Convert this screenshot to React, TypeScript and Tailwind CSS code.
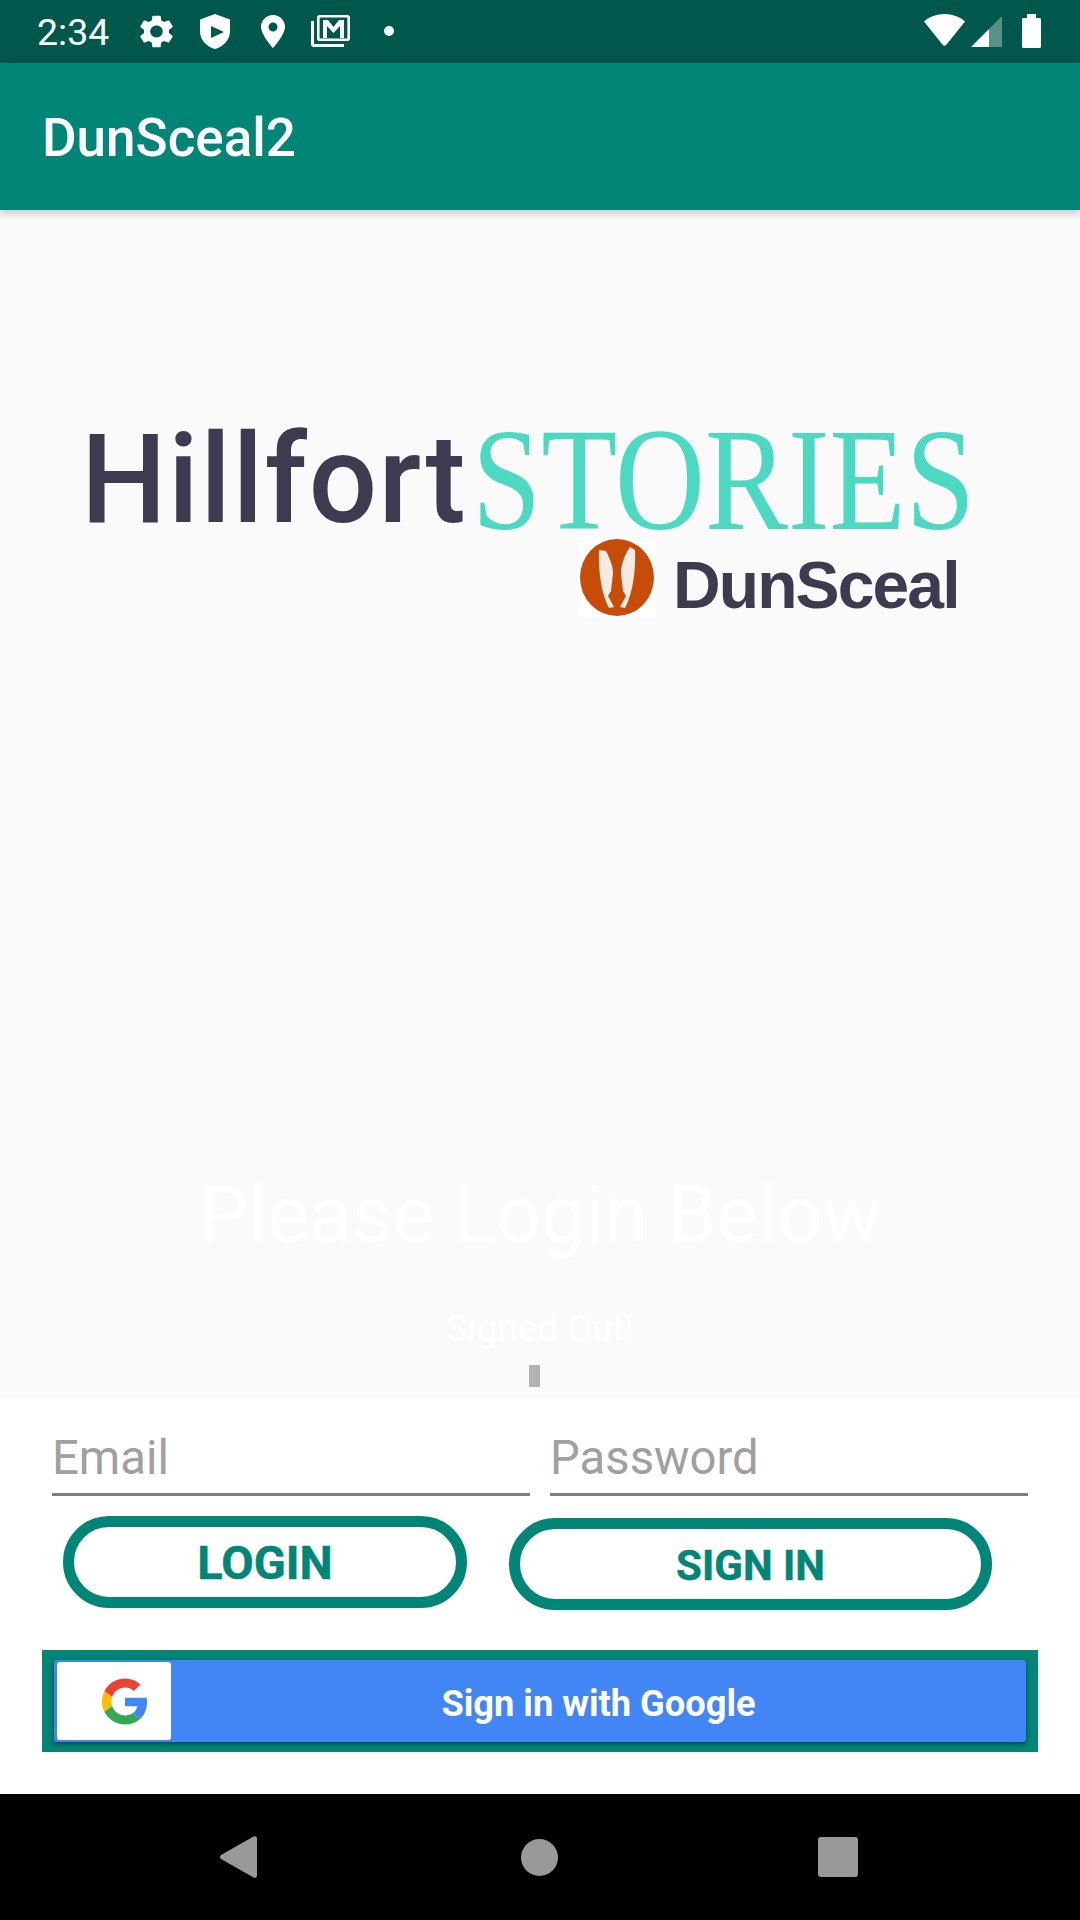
import React from 'react';

const roboto = { fontFamily: 'Roboto, sans-serif' };

const StatusIcons = () => (
  <>
    <svg className="absolute left-[140px] top-[15px] h-[33px] w-[33px]" viewBox="2.5 2 19 20" fill="#fff" preserveAspectRatio="none">
      <path d="M19.14 12.94c.04-.3.06-.61.06-.94 0-.32-.02-.64-.07-.94l2.03-1.58c.18-.14.23-.41.12-.61l-1.92-3.32c-.12-.22-.37-.29-.59-.22l-2.39.96c-.5-.38-1.03-.7-1.62-.94l-.36-2.54c-.04-.24-.24-.41-.48-.41h-3.84c-.24 0-.43.17-.47.41l-.36 2.54c-.59.24-1.13.57-1.62.94l-2.39-.96c-.22-.08-.47 0-.59.22L2.74 8.87c-.12.21-.08.47.12.61l2.03 1.58c-.05.3-.09.63-.09.94s.02.64.07.94l-2.03 1.58c-.18.14-.23.41-.12.61l1.92 3.32c.12.22.37.29.59.22l2.39-.96c.5.38 1.03.7 1.62.94l.36 2.54c.05.24.24.41.48.41h3.84c.24 0 .44-.17.47-.41l.36-2.54c.59-.24 1.13-.56 1.62-.94l2.39.96c.22.08.47 0 .59-.22l1.92-3.32c.12-.22.07-.47-.12-.61l-2.01-1.58zM12 15.6c-1.98 0-3.6-1.62-3.6-3.6s1.62-3.6 3.6-3.6 3.6 1.62 3.6 3.6-1.62 3.6-3.6 3.6z" />
    </svg>
    <svg className="absolute left-[200px] top-[14px] h-[35px] w-[30px]" viewBox="0 0 30 35" fill="#fff">
      <path fillRule="evenodd" d="M15 0L30 5.5V17C30 26 23.5 32.5 15 35C6.5 32.5 0 26 0 17V5.5ZM11 12V24L24 18Z" />
    </svg>
    <svg className="absolute left-[261px] top-[15px] h-[33px] w-[24px]" viewBox="0 0 24 33" fill="#fff">
      <path fillRule="evenodd" d="M12 0C5.4 0 0 5.2 0 11.7C0 20 12 33 12 33S24 20 24 11.7C24 5.2 18.6 0 12 0ZM12 7.5a4.5 4.5 0 1 1 0 9a4.5 4.5 0 1 1 0-9Z" />
    </svg>
    <svg className="absolute left-[311px] top-[15px] h-[33px] w-[39px]" viewBox="0 0 39 33" fill="none">
      <path d="M1.5 6V29C1.5 30 2 30.5 3 30.5H33" stroke="#fff" strokeWidth="3" />
      <rect x="7.3" y="1.3" width="30.4" height="23.4" rx="1.5" stroke="#fff" strokeWidth="2.6" />
      <path d="M12 5H17L22.5 12L28 5H33V23H29V11L22.5 18L16 11V23H12Z" fill="#fff" />
    </svg>
    <div className="absolute left-[384px] top-[26px] h-[10px] w-[10px] rounded-full bg-white" />
    <svg className="absolute left-[924px] top-[14px] h-[32px] w-[41px]" viewBox="0 0 41 32" fill="#fff">
      <path d="M20.5 0C12.5 0 5.5 2.8 0 7.5L18.8 31C19.7 32.1 21.3 32.1 22.2 31L41 7.5C35.5 2.8 28.5 0 20.5 0Z" />
    </svg>
    <svg className="absolute left-[971px] top-[16px] h-[31px] w-[31px]" viewBox="0 0 31 31" fill="#fff">
      <path d="M18 13L0 31H18Z" />
      <path d="M18 13L30 1C30.5 .5 31 .8 31 1.5V31H18Z" opacity="0.35" />
    </svg>
    <svg className="absolute left-[1022px] top-[14px] h-[34px] w-[19px]" viewBox="0 0 19 34" fill="#fff">
      <path d="M5 0H14V4H17.5C18.4 4 19 4.6 19 5.5V32.5C19 33.4 18.4 34 17.5 34H1.5C.6 34 0 33.4 0 32.5V5.5C0 4.6 .6 4 1.5 4H5Z" />
    </svg>
  </>
);

const GoogleG = () => (
  <svg className="h-[47px] w-[46px]" viewBox="0 0 48 48">
    <path fill="#EA4335" d="M24 9.5c3.54 0 6.71 1.22 9.21 3.6l6.85-6.85C35.9 2.38 30.47 0 24 0 14.62 0 6.51 5.38 2.56 13.22l7.98 6.19C12.43 13.72 17.74 9.5 24 9.5z" />
    <path fill="#4285F4" d="M46.98 24.55c0-1.57-.15-3.09-.38-4.55H24v9.02h12.94c-.58 2.96-2.26 5.48-4.78 7.18l7.73 6c4.51-4.18 7.09-10.36 7.09-17.65z" />
    <path fill="#FBBC05" d="M10.53 28.59c-.48-1.45-.76-2.99-.76-4.59s.27-3.14.76-4.59l-7.98-6.19C.92 16.46 0 20.12 0 24c0 3.88.92 7.54 2.56 10.78l7.97-6.19z" />
    <path fill="#34A853" d="M24 48c6.48 0 11.93-2.13 15.89-5.81l-7.73-6c-2.15 1.45-4.92 2.3-8.16 2.3-6.26 0-11.57-4.22-13.47-9.91l-7.98 6.19C6.51 42.62 14.62 48 24 48z" />
  </svg>
);

// the logo in the reference is an upscaled bitmap, hence the slight blur
const Logo = () => (
  <div className="ml-[81px] mt-[216px] h-[191px] w-[889px] blur-[0.6px]">
    <div className="flex h-[112px] items-start">
      <span className="w-[391px] shrink-0 origin-left scale-x-[0.965] text-[125px] leading-[108px] font-medium tracking-[1.5px] text-[#3f3a4f]">
        Hillfort
      </span>
      <span className="origin-left scale-x-[0.853] text-[146px] leading-[108px] text-[#4dd8c2]" style={{ fontFamily: '"Liberation Serif", serif' }}>
        STORIES
      </span>
    </div>
    <div className="ml-[497px] flex items-start gap-[17px]">
      <div className="flex h-[79px] w-[78px] shrink-0 items-center justify-center bg-white">
        <svg className="h-[77px] w-[74px]" viewBox="0 0 74 77">
          <ellipse cx="37" cy="38.5" rx="37" ry="38.5" fill="#c84c09" />
          <path d="M19 11L26 12C30 20 33 27 33 34L31 52L28 57L34 68L29 69C22 56 18 34 19 11Z" fill="#f4ebe4" />
          <path d="M50 8L55 11C56 34 52 56 45 69L40 68L46 57L43 52L41 34C41 27 44 16 50 8Z" fill="#f4ebe4" />
        </svg>
      </div>
      <span className="mt-[8px] text-[66px] leading-[79px] font-bold tracking-[-1.9px] text-[#3f3a4f]" style={{ fontFamily: '"Liberation Sans", sans-serif' }}>
        DunSceal
      </span>
    </div>
  </div>
);

export default function App() {
  return (
    <div className="relative flex h-[1920px] w-[1080px] flex-col overflow-hidden bg-white" style={roboto}>
      <div className="relative h-[63px] shrink-0 bg-[#00574b]">
        <span className="absolute left-[37px] top-[11px] text-[37.5px] leading-[43px] text-white">2:34</span>
        <StatusIcons />
      </div>

      <div className="relative z-10 flex h-[147px] shrink-0 items-center bg-[#008577] pl-[42px] pt-[2px] shadow-[0_3px_8px_rgba(0,0,0,0.22)]">
        <span className="text-[53px] leading-[62px] font-medium text-white">DunSceal2</span>
      </div>

      <div className="flex h-[1189px] shrink-0 flex-col bg-[#fafafa]">
        <Logo />
        <h1 className="mt-[552px] text-center text-[78.75px] leading-[92px] font-normal text-white">Please Login Below</h1>
        <p className="mt-[46px] text-center text-[36.75px] leading-[43px] text-white">Signed Out!</p>
        <div className="ml-[529px] mt-[15px] h-[22px] w-[11px] bg-[#b3b3b3]" />
      </div>

      <div className="h-[395px] shrink-0 bg-white">
        <div className="ml-[52px] mt-[30px] flex gap-[20px]">
          <div className="h-[67px] w-[478px] border-b-[3px] border-[#7d7d7d] text-[47.25px] leading-[59px] text-[#a0a0a0]">Email</div>
          <div className="h-[67px] w-[478px] border-b-[3px] border-[#7d7d7d] text-[47.25px] leading-[59px] text-[#a0a0a0]">Password</div>
        </div>
        <div className="ml-[63px] mt-[20px] flex items-start gap-[42px]">
          <button className="flex h-[92px] w-[404px] items-center justify-center rounded-full border-[11px] border-[#008577] pt-[2px] text-[47px] font-bold text-[#008577] [-webkit-text-stroke:0.5px_#008577]">LOGIN</button>
          <button className="mt-[2px] flex h-[92px] w-[483px] items-center justify-center rounded-full border-[11px] border-[#008577] pt-[2px] text-[42px] font-bold text-[#008577] [-webkit-text-stroke:0.5px_#008577]">SIGN IN</button>
        </div>
        <div className="ml-[42px] mt-[40px] h-[102px] w-[996px] bg-[#008577] px-[12px] py-[10px]">
          <div className="flex h-[82px] items-center rounded-[3px] bg-[#4285f4] pl-[3px] shadow-[0_2px_5px_rgba(0,0,0,0.45)]">
            <div className="flex h-[78px] w-[114px] shrink-0 items-center justify-center rounded-[3px] bg-white pl-[22px]">
              <GoogleG />
            </div>
            <span className="flex-1 pt-[6px] text-center text-[36.25px] font-bold text-white">Sign in with Google</span>
          </div>
        </div>
      </div>

      <div className="flex h-[126px] shrink-0 items-center bg-black pl-[220px]">
        <svg className="mb-[1px] h-[42px] w-[37px]" viewBox="0 0 37 42" fill="#999">
          <path d="M33.5 .6L1 19C-.3 20 -.3 22 1 23L33.5 41.4C35 42.4 37 41.5 37 39.5V2.5C37 .5 35 -.4 33.5 .6Z" />
        </svg>
        <div className="ml-[264px] h-[37px] w-[37px] rounded-full bg-[#999]" />
        <div className="ml-[260px] h-[40px] w-[40px] rounded-[3px] bg-[#999]" />
      </div>
    </div>
  );
}
